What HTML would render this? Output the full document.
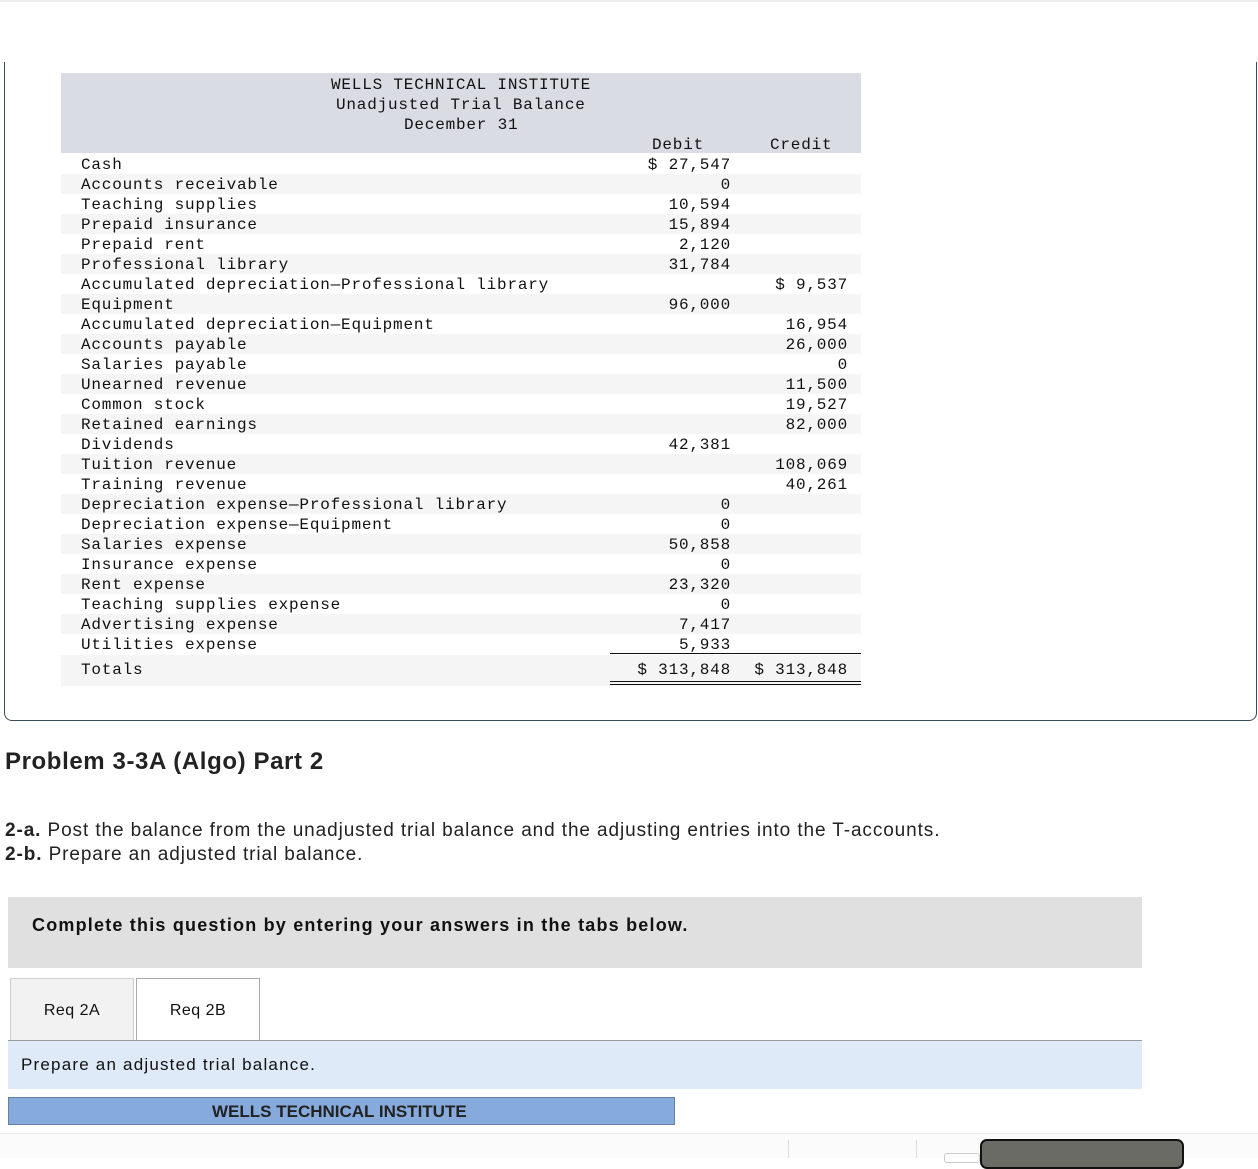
<!DOCTYPE html>
<html><head><meta charset="utf-8"><style>
*{margin:0;padding:0;box-sizing:border-box}
body{width:1258px;height:1158px;position:relative;background:#fff;font-family:"Liberation Sans",sans-serif;overflow:hidden;color:#222}
.mono{font-family:"Liberation Mono",monospace;font-size:16px;letter-spacing:0.8px;color:#111}
.abs{position:absolute}
.row{position:absolute;left:61px;width:800px;height:20px;line-height:22px}
.row.s{background:#f5f5f5}
.row .n{position:absolute;left:20px}
.row .d{position:absolute;right:130px}
.row .c{position:absolute;right:13px}
</style></head><body>
<div class="abs" style="left:0;top:0;width:1258px;height:2px;background:#eee"></div>
<div class="abs" style="left:4px;top:62px;width:1253px;height:659px;border:1px solid #3c4b5a;border-top:none;border-radius:0 0 8px 8px"></div>
<div class="abs" style="left:61px;top:73px;width:800px;height:80px;background:#d9dce3"></div>
<div class="abs mono" style="left:61px;top:75px;width:800px;text-align:left;line-height:20px">
<div style="position:absolute;left:0;width:800px"><div style="position:absolute;left:270px;white-space:pre">WELLS TECHNICAL INSTITUTE</div><div style="position:absolute;left:275px;top:20px;white-space:pre">Unadjusted Trial Balance</div><div style="position:absolute;left:343px;top:40px;white-space:pre">December 31</div><div style="position:absolute;left:591px;top:60px">Debit</div><div style="position:absolute;left:709px;top:60px">Credit</div></div></div>
<div class="mono">
<div class="row" style="top:154px"><span class="n">Cash</span><span class="d">$ 27,547</span></div>
<div class="row s" style="top:174px"><span class="n">Accounts receivable</span><span class="d">0</span></div>
<div class="row" style="top:194px"><span class="n">Teaching supplies</span><span class="d">10,594</span></div>
<div class="row s" style="top:214px"><span class="n">Prepaid insurance</span><span class="d">15,894</span></div>
<div class="row" style="top:234px"><span class="n">Prepaid rent</span><span class="d">2,120</span></div>
<div class="row s" style="top:254px"><span class="n">Professional library</span><span class="d">31,784</span></div>
<div class="row" style="top:274px"><span class="n">Accumulated depreciation—Professional library</span><span class="c">$ 9,537</span></div>
<div class="row s" style="top:294px"><span class="n">Equipment</span><span class="d">96,000</span></div>
<div class="row" style="top:314px"><span class="n">Accumulated depreciation—Equipment</span><span class="c">16,954</span></div>
<div class="row s" style="top:334px"><span class="n">Accounts payable</span><span class="c">26,000</span></div>
<div class="row" style="top:354px"><span class="n">Salaries payable</span><span class="c">0</span></div>
<div class="row s" style="top:374px"><span class="n">Unearned revenue</span><span class="c">11,500</span></div>
<div class="row" style="top:394px"><span class="n">Common stock</span><span class="c">19,527</span></div>
<div class="row s" style="top:414px"><span class="n">Retained earnings</span><span class="c">82,000</span></div>
<div class="row" style="top:434px"><span class="n">Dividends</span><span class="d">42,381</span></div>
<div class="row s" style="top:454px"><span class="n">Tuition revenue</span><span class="c">108,069</span></div>
<div class="row" style="top:474px"><span class="n">Training revenue</span><span class="c">40,261</span></div>
<div class="row s" style="top:494px"><span class="n">Depreciation expense—Professional library</span><span class="d">0</span></div>
<div class="row" style="top:514px"><span class="n">Depreciation expense—Equipment</span><span class="d">0</span></div>
<div class="row s" style="top:534px"><span class="n">Salaries expense</span><span class="d">50,858</span></div>
<div class="row" style="top:554px"><span class="n">Insurance expense</span><span class="d">0</span></div>
<div class="row s" style="top:574px"><span class="n">Rent expense</span><span class="d">23,320</span></div>
<div class="row" style="top:594px"><span class="n">Teaching supplies expense</span><span class="d">0</span></div>
<div class="row s" style="top:614px"><span class="n">Advertising expense</span><span class="d">7,417</span></div>
<div class="row" style="top:634px"><span class="n">Utilities expense</span><span class="d">5,933</span></div>
<div class="row s" style="top:655px;height:31px;line-height:30px"><span class="n">Totals</span><span class="d">$ 313,848</span><span class="c">$ 313,848</span></div>
</div>
<div class="abs" style="left:610px;top:653px;width:251px;height:1px;background:#111"></div>
<div class="abs" style="left:610px;top:681px;width:251px;height:4px;border-top:1px solid #111;border-bottom:1px solid #111"></div>
<div class="abs" style="left:5px;top:748px;font-size:24px;letter-spacing:0.6px;font-weight:bold;color:#222">Problem 3-3A (Algo) Part 2</div>
<div class="abs" style="left:5px;top:819px;font-size:19px;letter-spacing:0.9px;line-height:24px;color:#222"><b>2-a.</b> Post the balance from the unadjusted trial balance and the adjusting entries into the T-accounts.<br><b>2-b.</b> Prepare an adjusted trial balance.</div>
<div class="abs" style="left:8px;top:897px;width:1134px;height:71px;background:#e0e0e0"></div>
<div class="abs" style="left:32px;top:915px;font-size:18px;letter-spacing:1.2px;font-weight:bold;color:#111">Complete this question by entering your answers in the tabs below.</div>
<div class="abs" style="left:10px;top:978px;width:124px;height:63px;background:#f2f2f2;border:1px solid #ccc;border-bottom:none;font-size:16px;letter-spacing:0.5px;text-align:center;line-height:64px;color:#111">Req 2A</div>
<div class="abs" style="left:136px;top:978px;width:124px;height:63px;background:#fff;border:1px solid #aaa;border-bottom:none;font-size:16px;letter-spacing:0.5px;text-align:center;line-height:64px;color:#111">Req 2B</div>
<div class="abs" style="left:8px;top:1040px;width:1134px;height:1px;background:#999"></div>
<div class="abs" style="left:8px;top:1041px;width:1134px;height:48px;background:#deeaf7;font-size:17px;letter-spacing:1.2px;line-height:48px;padding-left:13px;color:#111">Prepare an adjusted trial balance.</div>
<div class="abs" style="left:8px;top:1097px;width:667px;height:28px;background:#85aadb;border:1px solid #6680a0;font-size:17px;font-weight:bold;line-height:28px;padding-left:203px;color:#222">WELLS TECHNICAL INSTITUTE</div>
<div class="abs" style="left:0;top:1133px;width:1258px;height:25px;background:#fbfbfb;border-top:1px solid #eee"></div>
<div class="abs" style="left:788px;top:1140px;width:1px;height:18px;background:#ddd"></div>
<div class="abs" style="left:916px;top:1140px;width:1px;height:18px;background:#ddd"></div>
<div class="abs" style="left:944px;top:1153px;width:36px;height:10px;border:1px solid #ccc;border-radius:3px"></div>
<div class="abs" style="left:980px;top:1139px;width:204px;height:30px;background:#6b6b66;border:2px solid #111;border-radius:7px"></div>
</body></html>
